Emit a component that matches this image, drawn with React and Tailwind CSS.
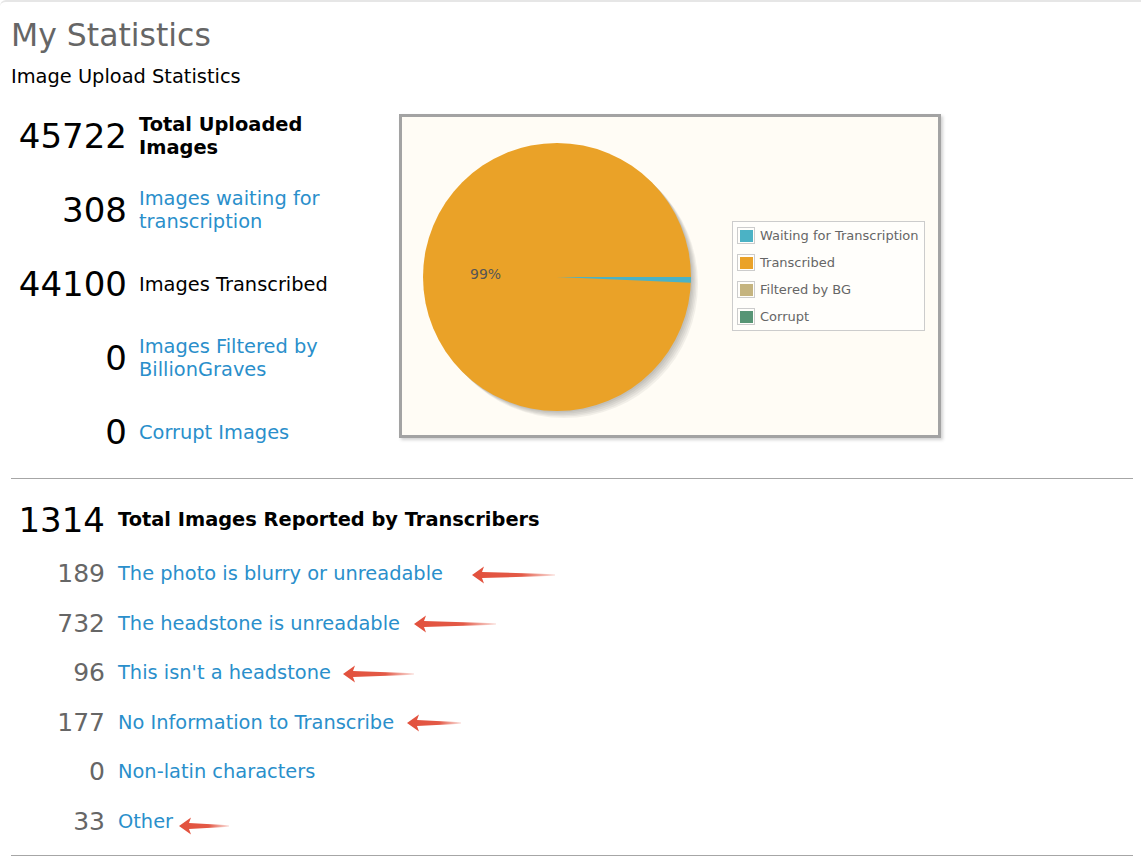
import React from "react";

const uploadRows = [
  { value: "45722", label: "Total Uploaded Images", bold: true },
  { value: "308", label: "Images waiting for transcription", link: true },
  { value: "44100", label: "Images Transcribed" },
  { value: "0", label: "Images Filtered by BillionGraves", link: true },
  { value: "0", label: "Corrupt Images", link: true },
];

// gap = space between text and arrow tip, len = arrow length
const reportRows = [
  { value: "189", label: "The photo is blurry or unreadable", arrow: { gap: 29, len: 83 } },
  { value: "732", label: "The headstone is unreadable", arrow: { gap: 14, len: 82 } },
  { value: "96", label: "This isn't a headstone", arrow: { gap: 12, len: 71 } },
  { value: "177", label: "No Information to Transcribe", arrow: { gap: 13, len: 54 } },
  { value: "0", label: "Non-latin characters" },
  { value: "33", label: "Other", arrow: { gap: 6, len: 50, down: true } },
];

const legend = [
  { name: "Waiting for Transcription", color: "#4bb2c5" },
  { name: "Transcribed", color: "#eaa228" },
  { name: "Filtered by BG", color: "#c5b47f" },
  { name: "Corrupt", color: "#579575" },
];

function Arrow({ len, id }) {
  return (
    <svg width={len} height="18" viewBox={`0 0 ${len} 18`} className="shrink-0">
      <defs>
        <linearGradient id={id} x1="0" x2="1" y1="0" y2="0">
          <stop offset="0" stopColor="#e2513d" stopOpacity="1" />
          <stop offset="0.6" stopColor="#e2513d" stopOpacity="0.95" />
          <stop offset="1" stopColor="#e2513d" stopOpacity="0.15" />
        </linearGradient>
      </defs>
      <path
        d={`M0 9 L12 0.5 L10 6 L${len} 8.2 L${len} 9.8 L10 12 L12 17.5 Z`}
        fill={`url(#${id})`}
      />
    </svg>
  );
}

function PieChart() {
  const cx = 155;
  const cy = 160;
  const r = 134;
  const a = (2.5 * Math.PI) / 180;
  const ex = cx + r * Math.cos(a);
  const ey = cy + r * Math.sin(a);
  return (
    <svg width="330" height="318" viewBox="0 0 330 318" className="shrink-0">
      {[1, 2, 3, 4, 5].map((k) => (
        <circle key={k} cx={cx + k * 1.4} cy={cy + k * 1.4} r={r} fill="#000" fillOpacity="0.05" />
      ))}
      <circle cx={cx} cy={cy} r={r} fill="#eaa228" />
      <path d={`M${cx} ${cy} L${cx + r} ${cy} A${r} ${r} 0 0 1 ${ex} ${ey} Z`} fill="#4bb2c5" />
      <text x="68" y="162" fontSize="14" fill="#555" fontFamily="DejaVu Sans, sans-serif">
        99%
      </text>
    </svg>
  );
}

export default function App() {
  return (
    <div className="min-h-[858px] bg-white font-['DejaVu_Sans',sans-serif] text-black">
      <div className="border-t-2 border-[#e6e6e6] rounded-tl-md pl-[11px] pr-[8px] pt-[15px]">
        <h1 className="text-[31.5px] leading-[36px] text-[#666] font-normal">My Statistics</h1>
        <div className="mt-[12px] text-[19.4px] leading-[23px]">Image Upload Statistics</div>

        <div className="mt-[11px] flex">
          <div className="w-[388px]">
            {uploadRows.map((row, i) => (
              <div key={i} className="flex h-[74px] items-center">
                <div className="w-[116px] text-right text-[34px] leading-[34px]">{row.value}</div>
                <div
                  className={`ml-[12px] max-w-[200px] text-[19.4px] leading-[23px] ${
                    row.bold ? "font-bold" : ""
                  } ${row.link ? "text-[#2a8fcb]" : ""}`}
                >
                  {row.label}
                </div>
              </div>
            ))}
          </div>

          <div className="mt-[15px] flex h-[324px] w-[542px] items-center border-[3px] border-[#a3a3a3] bg-[#fffcf5] shadow-[2px_2px_3px_rgba(0,0,0,0.18)]">
            <PieChart />
            <div className="border border-[#cccccc] bg-[#fffefb] pl-[4px] pr-[5px]">
              {legend.map((item) => (
                <div key={item.name} className="flex h-[27px] items-center text-[13px] text-[#666]">
                  <span className="flex h-[17px] w-[18px] items-center justify-center border border-[#cccccc]">
                    <span className="block h-[12px] w-[13px]" style={{ backgroundColor: item.color }} />
                  </span>
                  <span className="ml-[5px] whitespace-nowrap">{item.name}</span>
                </div>
              ))}
            </div>
          </div>
        </div>

        <div className="mt-[9px] border-t border-[#a6a6a6]" />

        <div className="mt-[12px] flex h-[58px] items-center">
          <div className="w-[94px] text-right text-[34px] leading-[34px]">1314</div>
          <div className="ml-[13px] text-[19.4px] font-bold">Total Images Reported by Transcribers</div>
        </div>

        {reportRows.map((row, i) => (
          <div key={i} className="flex h-[49.5px] items-center">
            <div className="w-[94px] text-right text-[25px] leading-[25px] text-[#666]">{row.value}</div>
            <div className="ml-[13px] text-[19.4px] leading-[23px] text-[#2a8fcb]">{row.label}</div>
            {row.arrow && (
              <div
                className={`flex ${row.arrow.down ? "mt-[10px]" : "mt-[2px]"}`}
                style={{ marginLeft: row.arrow.gap }}
              >
                <Arrow len={row.arrow.len} id={`arrow-grad-${i}`} />
              </div>
            )}
          </div>
        ))}

        <div className="mt-[9px] border-t border-[#a6a6a6]" />
      </div>
    </div>
  );
}
